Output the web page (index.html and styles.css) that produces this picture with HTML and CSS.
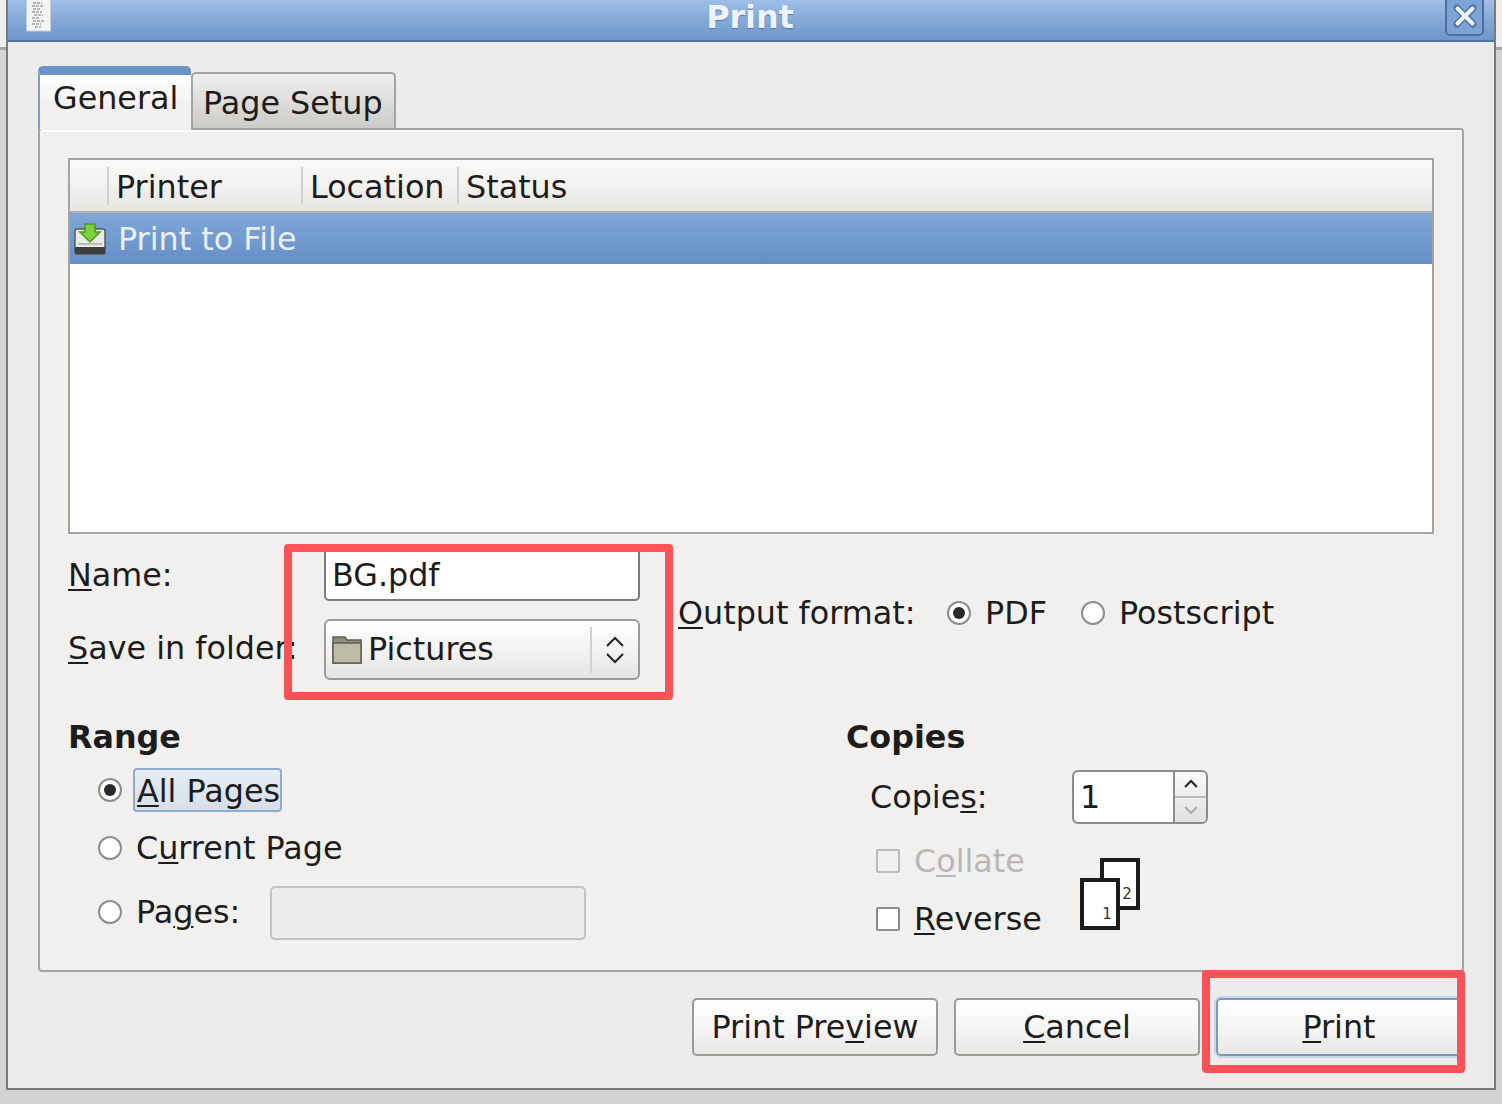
FILE: index.html
```html
<!DOCTYPE html>
<html lang="en">
<head>
<meta charset="utf-8">
<title>Print</title>
<link rel="stylesheet" href="styles.css">
</head>
<body>
<div class="window">
  <header class="titlebar">
    <svg class="doc-icon" width="25" height="32" viewBox="0 0 25 32"><rect x="0.5" y="-2" width="24" height="33" fill="#f4f4f2" stroke="#c4cfdc"/><path d="M7 3h9M6 6h11M7 9h8M6 12h10M8 15h9M6 18h8M7 21h11M6 24h9M9 27h6" stroke="#b4b4b1" stroke-width="2" stroke-dasharray="3 1"/></svg>
    <span class="title">Print</span>
    <span class="close">
      <svg width="24" height="24" viewBox="0 0 24 24"><path d="M4 4L20 20M20 4L4 20" stroke="#4c74a8" stroke-width="7" stroke-linecap="round"/><path d="M4.500 4.500L19.500 19.500M19.500 4.500L4.500 19.500" stroke="#eef3fb" stroke-width="4" stroke-linecap="round"/></svg>
    </span>
  </header>

  <div class="tabs">
    <div class="tab tab-active">General</div>
    <div class="tab tab-idle">Page Setup</div>
  </div>

  <section class="panel">
    <div class="list">
      <div class="list-head">
        <div class="col col-icon"></div>
        <div class="col col-printer">Printer</div>
        <div class="col col-location">Location</div>
        <div class="col col-status">Status</div>
      </div>
      <div class="list-row">
        <svg class="tray-icon" width="32" height="32" viewBox="0 0 32 32">
          <rect x="1" y="6" width="30" height="25" rx="2" fill="#e9ece6" stroke="#55585a" stroke-width="1.500"/>
          <rect x="1" y="24" width="30" height="7" rx="1" fill="#3c3f41"/>
          <rect x="4" y="20" width="24" height="2" fill="#b9bdb6"/>
          <path d="M11 1h10v8h5L16 19 6 9h5z" fill="#79d33a" stroke="#4f9a1e" stroke-width="1.500"/>
        </svg>
        <span class="row-text">Print to File</span>
      </div>
    </div>

    <div class="file-row">
      <div class="file-grid">
        <label class="field-label field-name"><u>N</u>ame:</label>
        <div class="entry">BG.pdf</div>
        <label class="field-label field-save"><u>S</u>ave in folder:</label>
        <div class="combo">
          <svg class="folder-icon" width="30" height="30" viewBox="0 0 30 30"><path d="M1 2h12l2 3h14v23H1z" fill="#8f8f78" stroke="#5e5e55" stroke-width="1.500"/><rect x="1" y="8" width="28" height="20" fill="#bcbda4" stroke="#5e5e55" stroke-width="1.500"/></svg>
          <span class="combo-text">Pictures</span>
          <span class="combo-arrows">
            <svg width="20" height="30" viewBox="0 0 20 30"><path d="M2 11L10 3L18 11M2 19L10 27L18 19" fill="none" stroke="#222" stroke-width="2"/></svg>
          </span>
        </div>
      </div>
      <div class="format">
        <span class="format-label"><u>O</u>utput format:</span>
        <span class="radio radio-on"></span><span class="format-opt format-pdf">PDF</span>
        <span class="radio"></span><span class="format-opt">Postscript</span>
      </div>
    </div>

    <div class="lower">
      <div class="range">
        <h2 class="heading">Range</h2>
        <div class="opt opt-all"><span class="radio radio-on"></span><span class="focus-box"><u>A</u>ll Pages</span></div>
        <div class="opt opt-current"><span class="radio"></span><span class="opt-text">C<u>u</u>rrent Page</span></div>
        <div class="opt opt-pages"><span class="radio"></span><span class="opt-text">Pa<u>g</u>es:</span><span class="entry-off"></span></div>
      </div>
      <div class="copies">
        <h2 class="heading">Copies</h2>
        <div class="copies-row">
          <span class="copies-label">Copie<u>s</u>:</span>
          <div class="spin">
            <span class="spin-value">1</span>
            <span class="spin-btns">
              <span class="spin-up"><svg width="16" height="10" viewBox="0 0 16 10"><path d="M2 8L8 2L14 8" fill="none" stroke="#222" stroke-width="2"/></svg></span>
              <span class="spin-down"><svg width="16" height="10" viewBox="0 0 16 10"><path d="M2 2L8 8L14 2" fill="none" stroke="#aaa" stroke-width="2"/></svg></span>
            </span>
          </div>
        </div>
        <div class="collate-area">
          <div class="checks">
            <div class="check-row check-off"><span class="check"></span><span>C<u>o</u>llate</span></div>
            <div class="check-row"><span class="check check-on"></span><span><u>R</u>everse</span></div>
          </div>
          <svg class="pages-icon" width="60" height="72" viewBox="0 0 60 72">
            <rect x="22" y="2" width="36" height="48" fill="#fff" stroke="#1c1c1c" stroke-width="4"/>
            <rect x="2" y="22" width="36" height="48" fill="#fff" stroke="#1c1c1c" stroke-width="4"/>
            <text x="47" y="41" class="page-num" text-anchor="middle">2</text>
            <text x="27" y="61" class="page-num" text-anchor="middle">1</text>
          </svg>
        </div>
      </div>
    </div>
  </section>

  <footer class="actions">
    <button class="btn">Print Pre<u>v</u>iew</button>
    <button class="btn"><u>C</u>ancel</button>
    <button class="btn btn-default"><u>P</u>rint</button>
  </footer>
</div>

<div class="mark mark-file"></div>
<div class="mark mark-print"></div>
</body>
</html>
```
FILE: styles.css
```css
* { box-sizing: border-box; }
html, body { margin: 0; height: 1104px; overflow: hidden; }
body {
  background: linear-gradient(#efeeec 0, #efeeec 47px, #a8a7a4 47px, #a8a7a4 50px, #d5d4d2 50px);
  font-family: "DejaVu Sans", sans-serif;
  font-size: 31.8px;
  color: #1c1c1c;
  line-height: 40px;
  position: relative;
}
u { text-underline-offset: 3px; text-decoration-thickness: 2px; }

.window {
  margin-left: 6px;
  width: 1490px;
  height: 1090px;
  background: #edecea;
  border: solid #7c7b78;
  border-width: 0 2px 2px 2px;
  display: flex;
  flex-direction: column;
  overflow: hidden;
}

.titlebar {
  flex: none;
  height: 42px;
  background: linear-gradient(#9dbee7, #6d96c9);
  border-bottom: 2px solid #4c74a8;
  display: flex;
  align-items: flex-start;
  position: relative;
}
.doc-icon { margin-left: 18px; display: block; }
.title {
  position: absolute;
  left: -2px;
  right: 0;
  top: 1px;
  line-height: 32px;
  text-align: center;
  color: #eef3fb;
  font-weight: bold;
  text-shadow: 0 1px 1px #4c74a8;
}
.close {
  position: absolute;
  right: 10px;
  top: -4px;
  width: 39px;
  height: 40px;
  border: 2px solid #4c6f9f;
  border-radius: 5px;
  background: #7ea4d6;
  display: flex;
  align-items: center;
  justify-content: center;
}

.tabs {
  flex: none;
  height: 86px;
  padding-left: 30px;
  display: flex;
  align-items: flex-end;
}
.tab { border-radius: 5px 5px 0 0; }
.tab-active {
  width: 153px;
  height: 64px;
  padding-left: 13px;
  margin-bottom: -2px;
  border: solid #a5a4a0;
  border-width: 9px 0 0 2px;
  border-top-color: #6a92c6;
  border-left-color: #7d9fc9;
  background: linear-gradient(#fff, #f1f0ee 60%);
  position: relative;
  z-index: 1;
  line-height: 46px;
}
.tab-idle {
  width: 205px;
  height: 56px;
  padding-left: 10px;
  border: 2px solid #a5a4a0;
  border-bottom: 0;
  background: linear-gradient(#f0efed, #cccbc8);
  line-height: 57px;
}

.panel {
  flex: none;
  margin: 0 30px;
  width: 1426px;
  height: 844px;
  padding: 28px;
  background: #f1f0ee;
  border: 2px solid #a5a4a0;
  border-radius: 4px;
  box-shadow: inset 0 2px 0 #fff;
}

.list {
  width: 1366px;
  height: 376px;
  border: 2px solid #a5a4a0;
  background: #fff;
}
.list-head {
  height: 53px;
  display: flex;
  align-items: center;
  background: linear-gradient(#fafaf9, #f2f1f0 50%, #e6e5e2);
  border-bottom: 2px solid #b0afab;
}
.col {
  height: 38px;
  line-height: 40px;
  padding-left: 7px;
  border-left: 2px solid #d2d1ce;
  white-space: nowrap;
}
.col-icon { width: 37px; border-left: 0; }
.col-printer { width: 194px; }
.col-location { width: 156px; }
.list-row {
  height: 51px;
  display: flex;
  align-items: center;
  padding-left: 4px;
  background: linear-gradient(#80a7d9, #648fc5);
}
.tray-icon { flex: none; }
.row-text { margin-left: 12px; color: #e8eff9; }

.file-row {
  display: flex;
  align-items: center;
  margin-top: 12px;
}
.file-grid {
  display: grid;
  grid-template-columns: 256px 316px;
  grid-template-rows: 55px 61px;
  row-gap: 18px;
}
.field-label { align-self: center; white-space: nowrap; }
.field-name { padding-top: 2px; }
.field-save { padding-bottom: 3px; }
.entry {
  background: #fff;
  border: 2px solid #7d7c78;
  border-radius: 5px;
  padding-left: 6px;
  line-height: 54px;
}
.combo {
  display: flex;
  align-items: center;
  border: 2px solid #9c9b97;
  border-radius: 6px;
  background: linear-gradient(#fff, #f4f3f2 50%, #e6e5e2);
  padding-left: 6px;
}
.folder-icon { flex: none; }
.combo-text { margin-left: 6px; flex: 1; padding-bottom: 2px; }
.combo-arrows {
  width: 47px;
  height: 46px;
  margin-right: 1px;
  border-left: 2px solid #d2d1ce;
  display: flex;
  align-items: center;
  justify-content: center;
}
.format {
  display: flex;
  align-items: center;
  margin-left: 38px;
  white-space: nowrap;
}
.format-label { width: 269px; }
.format-opt { margin-left: 14px; }
.format-pdf { width: 96px; }

.radio {
  flex: none;
  width: 24px;
  height: 24px;
  border-radius: 50%;
  border: 2px solid #8f8e8a;
  background: #fff;
  display: inline-flex;
  align-items: center;
  justify-content: center;
}
.radio-on::after {
  content: "";
  width: 12px;
  height: 12px;
  border-radius: 50%;
  background: #2a2a2a;
}

.lower { display: flex; margin-top: 39px; }
.range { width: 778px; flex: none; }
.heading { margin: 0; font-size: 31.8px; font-weight: bold; line-height: 36px; }
.opt {
  display: flex;
  align-items: center;
  padding-left: 30px;
}
.opt-all { height: 44px; margin-top: 13px; }
.opt-current { height: 44px; margin-top: 14px; }
.opt-pages { height: 54px; margin-top: 16px; }
.opt-pages .radio, .opt-pages .opt-text { margin-bottom: 2px; }
.opt-text { margin-left: 14px; white-space: nowrap; }
.focus-box {
  margin-left: 11px;
  height: 44px;
  width: 149px;
  padding-left: 2px;
  line-height: 42px;
  border: 2px solid #8fabcf;
  border-radius: 4px;
  background: linear-gradient(#e9edf3, #d5dfec);
  white-space: nowrap;
}
.entry-off {
  margin-left: 30px;
  width: 316px;
  height: 54px;
  border: 2px solid #c3c2be;
  border-radius: 5px;
  background: #edecea;
}

.copies { flex: 1; }
.copies-row {
  display: flex;
  align-items: center;
  margin-top: 15px;
  padding-left: 24px;
}
.copies-label { width: 202px; white-space: nowrap; }
.spin {
  display: flex;
  width: 136px;
  height: 54px;
  border: 2px solid #8d8c88;
  border-radius: 6px;
  background: #fff;
  overflow: hidden;
}
.spin-value { flex: 1; padding-left: 6px; line-height: 50px; }
.spin-btns {
  width: 33px;
  border-left: 2px solid #8d8c88;
  display: flex;
  flex-direction: column;
  background: linear-gradient(#fafaf9, #e2e1de);
}
.spin-up, .spin-down {
  flex: 1;
  display: flex;
  align-items: center;
  justify-content: center;
}
.spin-up { border-bottom: 2px solid #bdbcb8; }

.collate-area {
  display: flex;
  align-items: flex-start;
  padding-left: 29px;
  margin-top: 17px;
}
.checks { width: 205px; flex: none; display: flex; flex-direction: column; row-gap: 18px; }
.check-row {
  height: 40px;
  display: flex;
  align-items: center;
  column-gap: 15px;
  white-space: nowrap;
}
.check {
  flex: none;
  width: 24px;
  height: 24px;
  margin-left: 1px;
  margin-right: -1px;
  border: 2px solid #8f8e8a;
  border-radius: 2px;
  background: #fff;
}
.check-off { color: #b9b8b5; }
.check-off .check { background: #f1f0ee; border-color: #bdbcb9; }
.pages-icon { display: block; flex: none; margin-top: 17px; }
.page-num { font-family: "DejaVu Sans", sans-serif; font-size: 15px; fill: #333; }

.actions {
  flex: none;
  display: flex;
  justify-content: flex-end;
  column-gap: 16px;
  margin-top: 26px;
  padding-right: 32px;
}
.btn {
  width: 246px;
  height: 58px;
  padding: 0;
  font: inherit;
  color: #1c1c1c;
  border: 2px solid #9c9b97;
  border-radius: 5px;
  background: linear-gradient(#fff, #f7f6f5 50%, #e8e7e4);
}
.btn-default { border-color: #7a9abf; box-shadow: 0 0 0 2px #c8d6e8; }

.mark {
  position: absolute;
  border: 8px solid #ff5257;
  border-radius: 4px;
}
.mark-file { left: 284px; top: 544px; width: 389px; height: 156px; }
.mark-print { left: 1202px; top: 970px; width: 263px; height: 103px; }
```
